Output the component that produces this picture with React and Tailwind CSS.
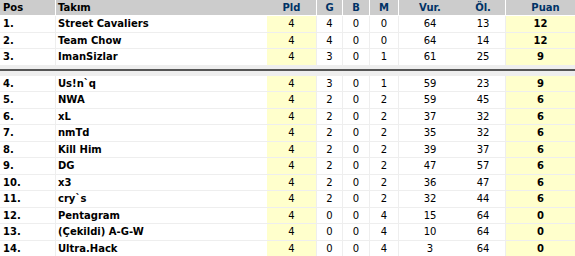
import React from "react";

const rows = [
  ["1.", "Street Cavaliers", 4, 4, 0, 0, 64, 13, 12],
  ["2.", "Team Chow", 4, 4, 0, 0, 64, 14, 12],
  ["3.", "ImanSizlar", 4, 3, 0, 1, 61, 25, 9],
  ["4.", "Us!n`q", 4, 3, 0, 1, 59, 23, 9],
  ["5.", "NWA", 4, 2, 0, 2, 59, 45, 6],
  ["6.", "xL", 4, 2, 0, 2, 37, 32, 6],
  ["7.", "nmTd", 4, 2, 0, 2, 35, 32, 6],
  ["8.", "Kill Him", 4, 2, 0, 2, 39, 37, 6],
  ["9.", "DG", 4, 2, 0, 2, 47, 57, 6],
  ["10.", "x3", 4, 2, 0, 2, 36, 47, 6],
  ["11.", "cry`s", 4, 2, 0, 2, 32, 44, 6],
  ["12.", "Pentagram", 4, 0, 0, 4, 15, 64, 0],
  ["13.", "(Çekildi) A-G-W", 4, 0, 0, 4, 10, 64, 0],
  ["14.", "Ultra.Hack", 4, 0, 0, 4, 3, 64, 0],
];

function Row({ r }) {
  const [pos, team, pld, g, b, m, vur, ol, puan] = r;
  return (
    <div className="flex h-[16.5px] shrink-0 border-b border-[#eeeeee] bg-white text-black leading-[15.5px]">
      <div className="w-[56px] shrink-0 border-r border-[#eeeeee] pl-[3px] font-bold">{pos}</div>
      <div className="w-[211px] shrink-0 pl-[2px] font-bold whitespace-nowrap">{team}</div>
      <div className="w-[50px] shrink-0 border-r border-[#eeeeee] bg-[#ffffcc] text-center">{pld}</div>
      <div className="w-[26px] shrink-0 border-r border-[#eeeeee] text-center">{g}</div>
      <div className="w-[27px] shrink-0 border-r border-[#eeeeee] text-center">{b}</div>
      <div className="w-[29px] shrink-0 border-r border-[#eeeeee] text-center">{m}</div>
      <div className="w-[62px] shrink-0 text-center">{vur}</div>
      <div className="w-[45px] shrink-0 border-r border-[#eeeeee] text-center">{ol}</div>
      <div className="w-[69px] shrink-0 bg-[#ffffcc] text-center font-bold">{puan}</div>
    </div>
  );
}

export default function App() {
  return (
    <div className="flex flex-col w-[575px] h-[256px] bg-white font-['DejaVu_Sans',_Verdana,_sans-serif] text-[10px] overflow-hidden">
      <div className="flex h-[16px] shrink-0 border-b border-white bg-[#cccccc] font-bold leading-[15px]">
        <div className="w-[56px] shrink-0 border-r border-white pl-[3px] text-black">Pos</div>
        <div className="w-[211px] shrink-0 pl-[2px] text-black">Takım</div>
        <div className="w-[50px] shrink-0 border-r border-white text-center text-[#003366]">Pld</div>
        <div className="w-[26px] shrink-0 border-r border-white text-center text-[#003366]">G</div>
        <div className="w-[27px] shrink-0 border-r border-white text-center text-[#003366]">B</div>
        <div className="w-[29px] shrink-0 border-r border-white text-center text-[#003366]">M</div>
        <div className="w-[62px] shrink-0 text-center text-[#003366]">Vur.</div>
        <div className="w-[45px] shrink-0 border-r border-white text-center text-[#003366]">Öl.</div>
        <div className="w-[69px] shrink-0 pl-[10px] text-center text-[#003366]">Puan</div>
      </div>
      {rows.slice(0, 3).map((r) => (
        <Row key={r[0]} r={r} />
      ))}
      <div className="h-[10px] shrink-0 flex flex-col">
        <div className="h-[3px] bg-[#eeeeee]" />
        <div className="h-[2px] bg-[#555555]" />
        <div className="h-[5px] bg-[#eeeeee]" />
      </div>
      {rows.slice(3).map((r) => (
        <Row key={r[0]} r={r} />
      ))}
    </div>
  );
}
